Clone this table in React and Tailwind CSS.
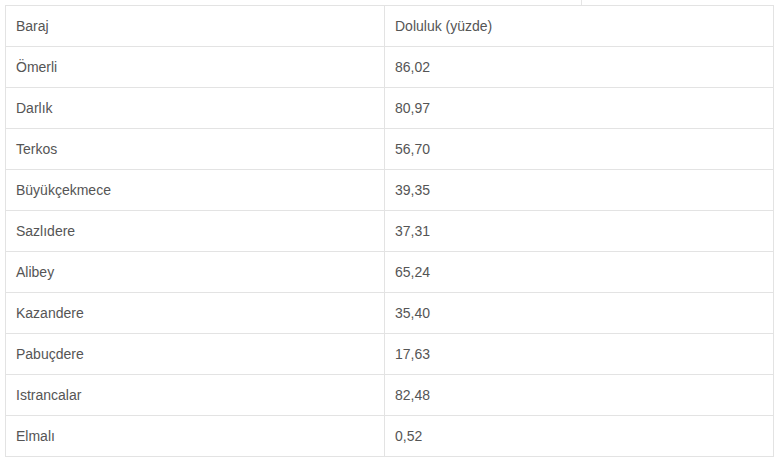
const rows = [
  ["Ömerli", "86,02"],
  ["Darlık", "80,97"],
  ["Terkos", "56,70"],
  ["Büyükçekmece", "39,35"],
  ["Sazlıdere", "37,31"],
  ["Alibey", "65,24"],
  ["Kazandere", "35,40"],
  ["Pabuçdere", "17,63"],
  ["Istrancalar", "82,48"],
  ["Elmalı", "0,52"],
];

export default function App() {
  return (
    <div className="bg-white min-h-[457px] w-[775px] font-['Liberation_Sans',Arial,sans-serif] text-[14px] text-[#555]">
      <div className="flex h-[5px]">
        <div className="w-[582px] border-r border-[#e5e5e5]" />
      </div>
      <table className="ml-[5px] w-[769px] border-collapse border border-[#e3e3e3]">
        <tbody>
          {[["Baraj", "Doluluk (yüzde)"], ...rows].map(([name, value]) => (
            <tr key={name} className="h-[41px]">
              <td className="w-[379px] border border-[#e3e3e3] px-[10px] py-0 align-middle">{name}</td>
              <td className="border border-[#e3e3e3] px-[10px] py-0 align-middle">{value}</td>
            </tr>
          ))}
        </tbody>
      </table>
    </div>
  );
}
